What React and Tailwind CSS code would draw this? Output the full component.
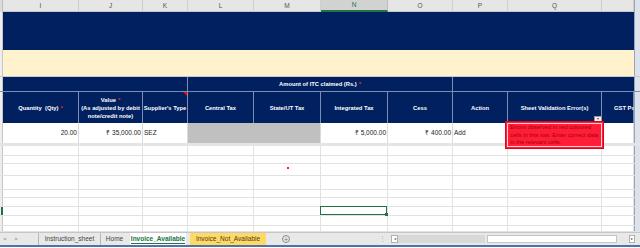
const cols = "grid grid-cols-[3px_76px_64px_45px_66px_67px_67px_65px_55px_94px_32px_6px]";

const letters = ["I", "J", "K", "L", "M", "N", "O", "P", "Q", ""];

const emptyRows = [
    { h: "h-[10px]" },
    { h: "h-[8px]" },
    { h: "h-[12px]", dot: true },
    { h: "h-[14px]" },
    { h: "h-[8px]" },
    { h: "h-[9px]" },
    { h: "h-[9px]", selected: true },
    { h: "h-[10px]" },
    { h: "h-[6px]" },
];

const Star = () => <span className="text-[#ff2020] ml-[2px]">*</span>;

const HeaderCell = ({ children, className = "" }) => (
    <div className={`flex items-center justify-center text-center whitespace-nowrap border-r border-[#7b8db0] text-white font-bold text-[5.8px] leading-[8px] ${className}`}>
        {children}
    </div>
);

const App = () => {
    return (
        <div className="relative w-[640px] h-[248px] overflow-hidden bg-white font-['Liberation_Sans',Arial,sans-serif] flex flex-col">
            {/* column letters */}
            <div className={`${cols} h-[12px] bg-[#e6e6e6] border-b border-[#c8c8c8] text-[6.5px] text-[#555]`}>
                <div className="bg-[#dcdcdc] border-r border-[#bdbdbd]" />
                {letters.map((l, i) =>
                    l === "N" ? (
                        <div key={i} className="flex items-center justify-center bg-[#d2d2d2] border-r border-[#bdbdbd] border-b-2 border-b-[#217346] text-[#217346]">
                            {l}
                        </div>
                    ) : (
                        <div key={i} className="flex items-center justify-center border-r border-[#cfcfcf]">
                            {l}
                        </div>
                    )
                )}
                <div className="bg-[#dde3ec] border-l border-[#9aa6b8]" />
            </div>

            {/* navy band */}
            <div className={`${cols} h-[38px]`}>
                <div className="bg-[#eeeeee] border-r border-[#c6c6c6]" />
                <div className="col-span-10 bg-[#002060]" />
                <div className="bg-[#dde3ec] border-l border-[#9aa6b8]" />
            </div>

            {/* cream band */}
            <div className={`${cols} h-[27px] border-b border-[#c9c9c9]`}>
                <div className="bg-[#eeeeee] border-r border-[#c6c6c6]" />
                <div className="col-span-10 bg-[#fff2cc]" />
                <div className="bg-[#dde3ec] border-l border-[#9aa6b8]" />
            </div>

            {/* group header row */}
            <div className={`${cols} h-[15px] bg-[#002060] border-b border-[#7b8db0]`}>
                <div className="bg-[#eeeeee] border-r border-[#c6c6c6]" />
                <div className="col-span-3 border-r border-[#7b8db0]" />
                <HeaderCell className="col-span-4">
                    Amount of ITC claimed (Rs.)
                    <Star />
                </HeaderCell>
                <div className="col-span-3" />
                <div className="bg-[#dde3ec] border-l border-[#9aa6b8]" />
            </div>

            {/* column header row */}
            <div className={`${cols} h-[31px] bg-[#002060] relative`}>
                <div className="bg-[#eeeeee] border-r border-[#c6c6c6]" />
                <HeaderCell>
                    Quantity&nbsp;&nbsp;(Qty)
                    <Star />
                </HeaderCell>
                <HeaderCell className="flex-col leading-[7.5px]">
                    <div>
                        Value
                        <Star />
                    </div>
                    <div>(As adjusted by debit</div>
                    <div>note/credit note)</div>
                </HeaderCell>
                <HeaderCell className="relative">
                    Supplier's Type
                    <span className="absolute right-0 top-0 w-0 h-0 border-l-[4px] border-l-transparent border-t-[4px] border-t-[#ff0000]" />
                </HeaderCell>
                <HeaderCell>Central Tax</HeaderCell>
                <HeaderCell>State/UT Tax</HeaderCell>
                <HeaderCell>Integrated Tax</HeaderCell>
                <HeaderCell>Cess</HeaderCell>
                <HeaderCell>Action</HeaderCell>
                <HeaderCell>Sheet Validation Error(s)</HeaderCell>
                <HeaderCell className="justify-start pl-[12px]">GST Po</HeaderCell>
                <div className="bg-[#dde3ec] border-l border-[#9aa6b8]" />
            </div>

            {/* data row */}
            <div className={`${cols} h-[23px] border-b-[3px] border-[#e4e4e4] text-[6.5px] text-[#222]`}>
                <div className="bg-[#eeeeee] border-r border-[#c6c6c6]" />
                <div className="flex items-center justify-end pr-[1px] border-r border-[#dadada]">20.00</div>
                <div className="flex items-center justify-end pr-[1px] border-r border-[#dadada]">₹ 35,000.00</div>
                <div className="flex items-center pl-[1px] border-r border-[#dadada]">SEZ</div>
                <div className="col-span-2 bg-[#c0c0c0] border-r border-[#dadada]" />
                <div className="flex items-center justify-end pr-[1px] border-r border-[#dadada]">₹ 5,000.00</div>
                <div className="flex items-center justify-end pr-[1px] border-r border-[#dadada]">₹ 400.00</div>
                <div className="flex items-center pl-[1px] border-r border-[#dadada]">Add</div>
                <div className="border-r border-[#dadada]" />
                <div className="border-r border-[#dadada]" />
                <div className="bg-[#dde3ec] border-l border-[#9aa6b8]" />
            </div>

            {/* empty rows */}
            {emptyRows.map((r, idx) => (
                <div key={idx} className={`${cols} ${r.h} border-b border-[#e2e2e2]`}>
                    <div className={r.selected ? "bg-[#eeeeee] border-r-2 border-[#217346]" : "bg-[#eeeeee] border-r border-[#c6c6c6]"} />
                    {Array.from({ length: 10 }).map((_, i) => (
                        <div key={i} className="relative border-r border-[#e2e2e2]">
                            {r.dot && i === 4 && (
                                <span className="absolute left-[33px] top-[3px] w-[2px] h-[2px] bg-[#ff2020]" />
                            )}
                            {r.selected && i === 5 && (
                                <div className="absolute -left-[1px] -top-[1px] right-0 bottom-0 border border-[#217346]">
                                    <span className="absolute -right-[2px] -bottom-[2px] w-[3px] h-[3px] bg-[#217346]" />
                                </div>
                            )}
                        </div>
                    ))}
                    <div className="bg-[#dde3ec] border-l border-[#9aa6b8]" />
                </div>
            ))}

            {/* sheet tabs */}
            <div className="flex h-[13px] bg-[#e8e8e8] border-t border-[#c6c6c6] text-[6.5px] text-[#444] items-stretch">
                <div className="w-[38px] flex items-center gap-[9px] pl-[3px] text-[#b0b0b0] text-[4px]">
                    <span>◀</span>
                    <span>▶</span>
                </div>
                <div className="w-[62px] flex items-center justify-center border-l border-[#b8b8b8]">Instruction_sheet</div>
                <div className="w-[28px] flex items-center justify-center border-l border-[#b8b8b8]">Home</div>
                <div className="ml-[2px] w-[56px] bg-white flex items-center justify-center text-[#217346] font-bold relative">
                    <span className="border-b border-[#217346] leading-[8px]">Invoice_Available</span>
                </div>
                <div className="ml-[4px] w-[76px] bg-[#ffd966] flex items-center justify-center text-[#4a3e1c]">Invoice_Not_Available</div>
                <div className="w-[40px] flex items-center justify-center">
                    <span className="w-[8px] h-[8px] rounded-full border border-[#8a8a8a] flex items-center justify-center text-[#777] text-[7px] leading-none">+</span>
                </div>
                <div className="w-[85px] flex items-center justify-end pr-[5px] text-[#aaa]">⋮</div>
                <div className="my-[2px] w-[7px] bg-white border border-[#b0b0b0] flex items-center justify-center text-[4px] text-[#555]">◂</div>
                <div className="my-[2px] w-[87px] bg-[#d8d8d8]" />
                <div className="my-[2px] ml-[2px] w-[130px] bg-white border border-[#c4c4c4]" />
                <div className="flex-1" />
                <div className="my-[2px] mr-[5px] w-[6px] bg-white border border-[#b0b0b0] flex items-center justify-center text-[4px] text-[#555]">▸</div>
            </div>
            <div className="h-[2px] bg-[#4d73a8]" />

            {/* validation dropdown button + error note */}
            <div className="absolute left-[594px] top-[116px] w-[8px] h-[6px] bg-[#f4f4f4] border border-[#9a9a9a] flex items-center justify-center text-[4px] text-[#444] leading-none">▾</div>
            <div className="absolute left-[505px] top-[121px] w-[99px] h-[28px] bg-[#ff1e3a] border border-[#e4001a] p-[1px]">
                <div className="w-full h-full border border-[#ffd0d0] pl-[2px] text-[5.8px] leading-[7.6px] text-[#a80000] whitespace-nowrap">
                    <div>Errors observed in red coloured</div>
                    <div>cells in this row. Enter correct data</div>
                    <div>in the relevant cells.</div>
                </div>
            </div>
        </div>
    );
};

export default App;
